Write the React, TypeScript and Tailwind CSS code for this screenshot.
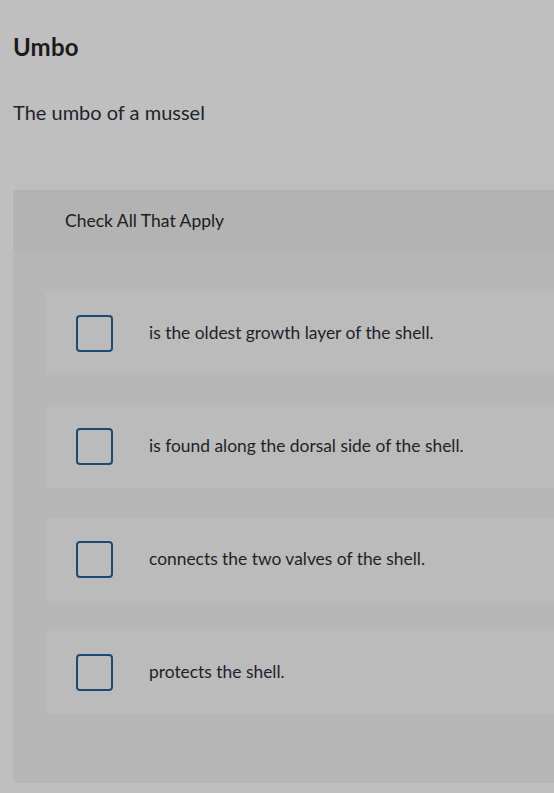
import React from "react";

const items = [
  "is the oldest growth layer of the shell.",
  "is found along the dorsal side of the shell.",
  "connects the two valves of the shell.",
  "protects the shell.",
];

export default function App() {
  return (
    <div className="w-[554px] h-[793px] overflow-hidden bg-[#bfbfbf] text-[#1c1c1c]" style={{ fontFamily: "Lato, 'Open Sans', sans-serif" }}>
      <div className="pt-[33px] pl-[13px]">
        <h1 className="text-[24px] leading-[28px] font-bold text-[#1a1a1a] tracking-[0.2px]">Umbo</h1>
        <p className="mt-[37px] text-[20px] leading-[28px] text-[#1f1f2e]">The umbo of a mussel</p>
      </div>
      <div className="mt-[64px] ml-[13px] w-[620px] h-[593px] bg-[#b7b7b7] rounded-[3px] overflow-hidden">
        <div className="h-[62px] bg-[#b3b3b3] flex items-center pl-[52px] text-[17.5px]">Check All That Apply</div>
        <div className="pt-[40px] pl-[32px] flex flex-col gap-[30px]">
          {items.map((t) => (
            <div key={t} className="h-[83px] bg-[#bbbbbb] rounded-[3px] flex items-center pl-[31px]">
              <div className="w-[37px] h-[37px] border-2 border-[#1b4a78] rounded-[4px] shrink-0" />
              <span className="ml-[36px] text-[17.4px] text-[#1f1f2a]">{t}</span>
            </div>
          ))}
        </div>
      </div>
    </div>
  );
}
